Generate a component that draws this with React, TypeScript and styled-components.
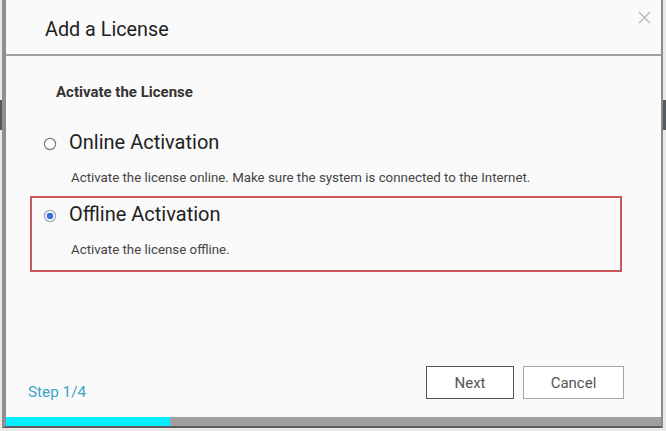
import React from 'react'
import styled, {createGlobalStyle} from 'styled-components'

const GlobalStyle = createGlobalStyle`
  html, body {
    margin: 0;
    padding: 0;
  }
  body {
    width: 666px;
    height: 431px;
    overflow: hidden;
    font-family: Roboto, "Liberation Sans", sans-serif;
    background:
      linear-gradient(#555a60, #555a60) 0 100px / 2px 30px no-repeat,
      linear-gradient(#555a60, #555a60) 663px 100px / 3px 30px no-repeat,
      #e9e9e9;
  }
`

type Option = {
  id: string
  label: string
  desc: string
}

const options: Option[] = [
  {id: 'online', label: 'Online Activation', desc: 'Activate the license online. Make sure the system is connected to the Internet.'},
  {id: 'offline', label: 'Offline Activation', desc: 'Activate the license offline.'},
]

export default function App() {
  const [selected, setSelected] = React.useState('offline')

  return (
    <Page>
      <GlobalStyle />
      <Dialog>
        <Header>
          <Title>Add a License</Title>
          <CloseBtn aria-label="close">
            <svg width="13" height="13" viewBox="0 0 13 13">
              <path d="M1 1 L12 12 M12 1 L1 12" stroke="#b4b4b4" strokeWidth="1.2" />
            </svg>
          </CloseBtn>
        </Header>
        <Body>
          <Section>Activate the License</Section>
          <Options>
            {options.map(o => (
              <OptionBox key={o.id} $active={selected === o.id} onClick={() => setSelected(o.id)}>
                <OptionRow>
                  <Radio checked={selected === o.id} />
                  <OptionLabel>{o.label}</OptionLabel>
                </OptionRow>
                <OptionDesc>{o.desc}</OptionDesc>
              </OptionBox>
            ))}
          </Options>
        </Body>
        <Footer>
          <Step>Step 1/4</Step>
          <Buttons>
            <Button $primary>Next</Button>
            <Button $wide>Cancel</Button>
          </Buttons>
        </Footer>
        <Progress>
          <ProgressFill style={{width: `${(1 / 4) * 100}%`}} />
        </Progress>
      </Dialog>
    </Page>
  )
}

const Radio: React.FC<{checked: boolean}> = ({checked}) => (
  <RadioIcon width="14" height="14" viewBox="0 0 14 14">
    <circle cx="7" cy="7" r="5.6" fill="#fff" stroke={checked ? '#9aa6b8' : '#7a7a7a'} strokeWidth="1.2" />
    {checked && <circle cx="7" cy="7" r="3.3" fill="#3f6fd1" />}
  </RadioIcon>
)

const Page = styled.div`
  display: flex;
  padding-left: 2px;
  height: 431px;
  box-sizing: border-box;
`

const Dialog = styled.div`
  width: 661px;
  height: 428px;
  box-sizing: border-box;
  display: flex;
  flex-direction: column;
  background: #fafafa;
  border-left: 4px solid #8f8f8f;
  border-right: 2px solid #8a8a8a;
  border-bottom: 2px solid #5c5c5c;
`

const Header = styled.div`
  height: 54px;
  flex: none;
  display: flex;
  align-items: flex-start;
  justify-content: space-between;
  border-bottom: 2px solid #a2a2a2;
`

const Title = styled.h1`
  margin: 18px 0 0 39px;
  font-size: 19.8px;
  font-weight: 400;
  color: #222;
`

const CloseBtn = styled.button`
  border: 0;
  background: none;
  padding: 0;
  margin: 11px 10px 0 0;
  display: flex;
  cursor: pointer;
`

const Body = styled.div`
  flex: 1;
  padding: 27px 0 0 24px;
`

const Section = styled.div`
  margin-left: 26px;
  font-size: 15px;
  font-weight: 700;
  color: #333;
`

const Options = styled.div`
  display: flex;
  flex-direction: column;
  margin-top: 25px;
  width: 592px;
`

const OptionBox = styled.div<{$active: boolean}>`
  height: ${p => (p.$active ? '76px' : '70px')};
  box-sizing: border-box;
  padding: ${p => (p.$active ? '4px 0 0 11px' : '4px 0 0 13px')};
  border: ${p => (p.$active ? '2px solid #c85a5c' : '0')};
  cursor: pointer;
`

const OptionRow = styled.div`
  display: flex;
  align-items: center;
  gap: 12px;
`

const RadioIcon = styled.svg`
  flex: none;
  margin-top: 3px;
`

const OptionLabel = styled.span`
  font-size: 20px;
  color: #222;
`

const OptionDesc = styled.div`
  margin: 16px 0 0 28px;
  font-size: 13.3px;
  color: #444;
`

const Footer = styled.div`
  flex: none;
  height: 58px;
  display: flex;
  align-items: flex-start;
  justify-content: space-between;
  padding: 7px 37px 0 22px;
  box-sizing: border-box;
`

const Step = styled.span`
  margin-top: 17px;
  font-size: 15.3px;
  color: #3ba5c6;
`

const Buttons = styled.div`
  display: flex;
  gap: 9px;
`

const Button = styled.button<{$primary?: boolean; $wide?: boolean}>`
  width: ${p => (p.$wide ? '101px' : '88px')};
  height: 33px;
  background: #fff;
  border: 1px solid ${p => (p.$primary ? '#555' : '#a4a4a4')};
  font-family: Roboto, "Liberation Sans", sans-serif;
  font-size: 15px;
  color: #555;
  cursor: pointer;
`

const Progress = styled.div`
  flex: none;
  height: 9px;
  background: #a0a0a0;
`

const ProgressFill = styled.div`
  height: 100%;
  background: #00f0ff;
`
